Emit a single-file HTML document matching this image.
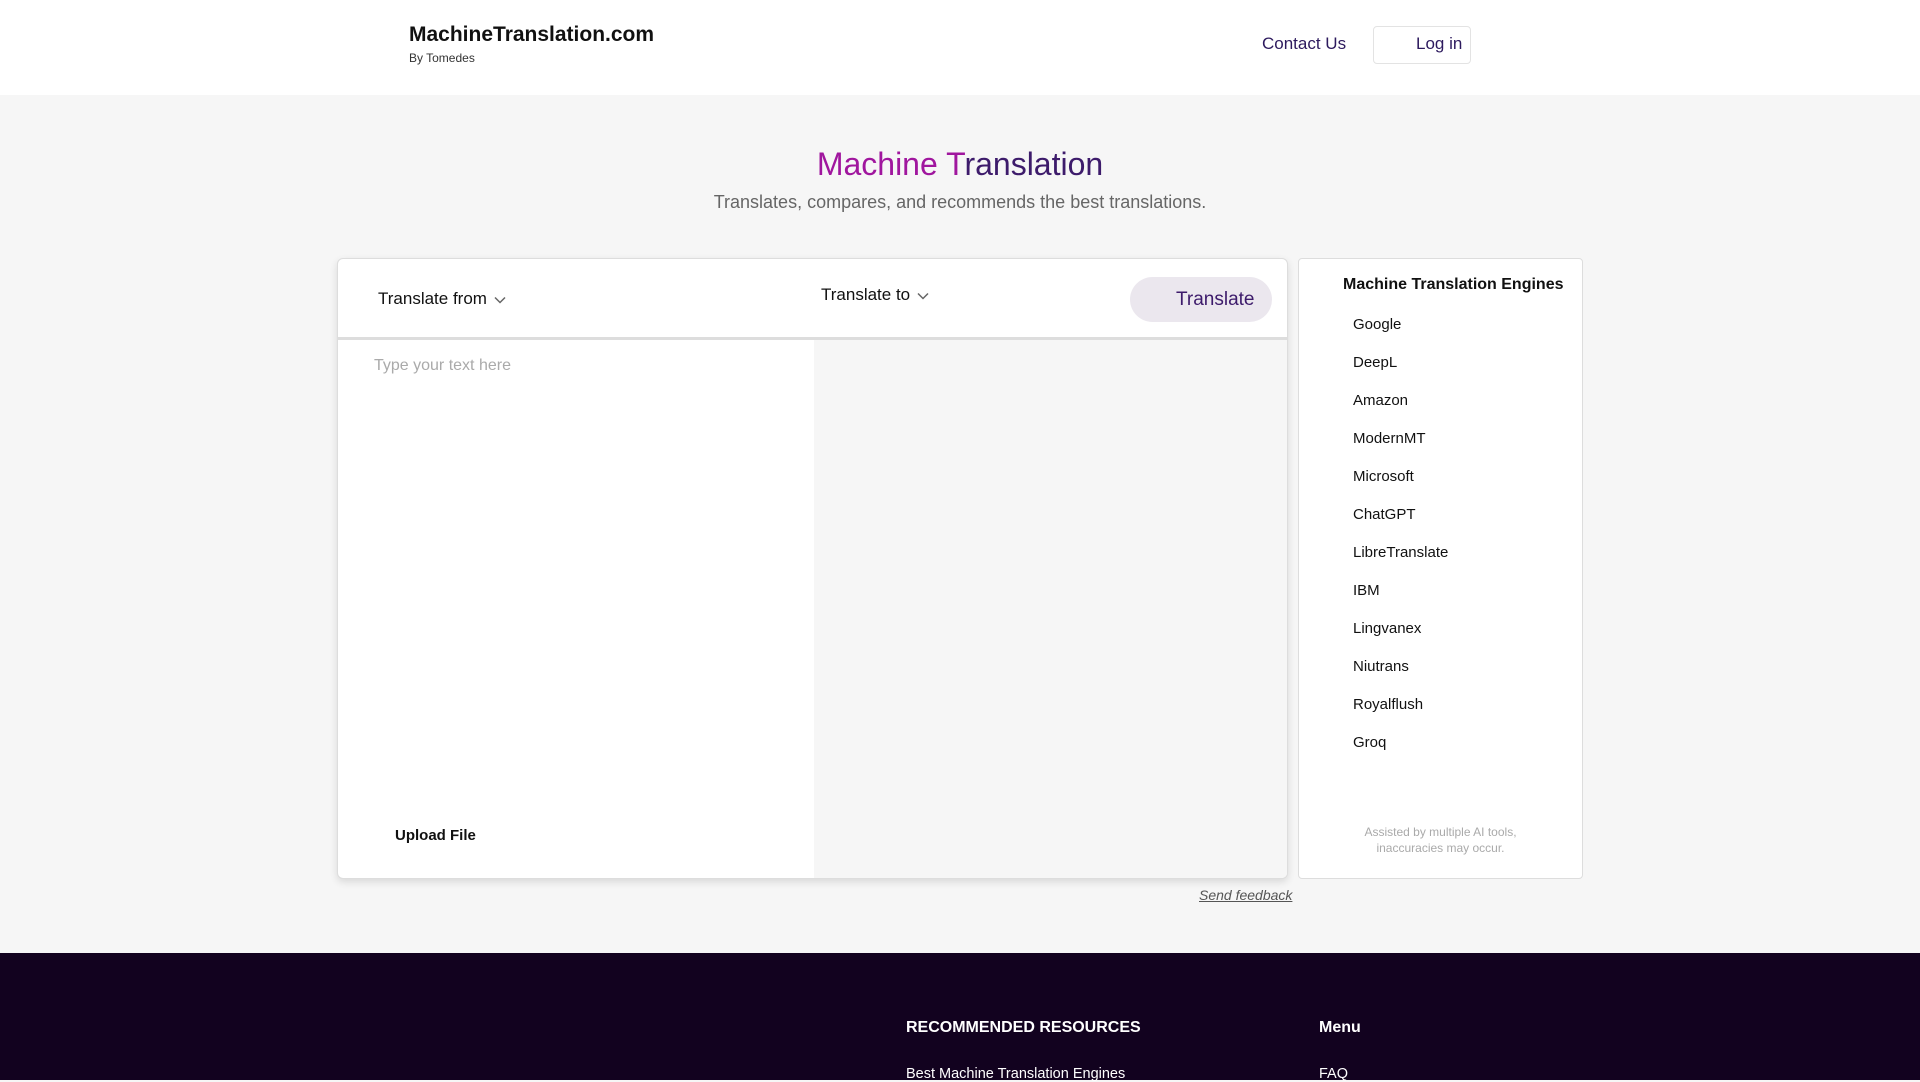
<!DOCTYPE html>
<html><head><meta charset="utf-8"><style>
*{box-sizing:border-box;margin:0;padding:0}
body{width:1920px;height:1080px;overflow:hidden;background:#f6f6f6;font-family:"Liberation Sans",sans-serif;position:relative}
.a{position:absolute;white-space:nowrap}
</style></head><body>
<div class="a" style="left:0;top:0;width:1920px;height:95px;background:#fff"></div>
<div class="a" style="left:409px;top:23px;font-size:21px;font-weight:bold;color:#111">MachineTranslation.com</div>
<div class="a" style="left:409px;top:51px;font-size:12px;color:#333">By Tomedes</div>
<div class="a" style="left:1262px;top:34px;font-size:17px;color:#2d1a5e">Contact Us</div>
<div class="a" style="left:1373px;top:26px;width:98px;height:38px;border:1px solid #e3e3e3;border-radius:4px;background:#fff"></div>
<div class="a" style="left:1416px;top:34px;font-size:17px;color:#2d1a5e">Log in</div>
<div class="a" style="left:0;width:1920px;top:146px;text-align:center;font-size:32px;"><span style="color:#a0169e">Machine T</span><span style="color:#3d1b6b">ranslation</span></div>
<div class="a" style="left:0;width:1920px;top:192px;text-align:center;font-size:18px;color:#666">Translates, compares, and recommends the best translations.</div>
<div class="a" style="left:337px;top:258px;width:951px;height:621px;background:#fff;border:1px solid #ddd;border-radius:6px;box-shadow:0 3px 8px rgba(0,0,0,.12);overflow:hidden">
 <div class="a" style="left:0;top:78px;width:951px;height:3px;background:#ddd"></div>
 <div class="a" style="left:476px;top:81px;width:475px;height:540px;background:#f6f6f6"></div>
 <div class="a" style="left:40px;top:30px;font-size:17px;color:#111">Translate from <svg width="12" height="8" viewBox="0 0 12 8" style="margin-left:2px"><path d="M1 1.5l5 5 5-5" fill="none" stroke="#666" stroke-width="1.5"/></svg></div>
 <div class="a" style="left:483px;top:26px;font-size:17px;color:#111">Translate to <svg width="12" height="8" viewBox="0 0 12 8" style="margin-left:2px"><path d="M1 1.5l5 5 5-5" fill="none" stroke="#666" stroke-width="1.5"/></svg></div>
 <div class="a" style="left:792px;top:18px;width:142px;height:45px;border-radius:23px;background:#ebe7ee"></div>
 <div class="a" style="left:838px;top:30px;font-size:19px;color:#3d1b6b">Translate</div>
 <div class="a" style="left:36px;top:98px;font-size:16px;color:#aaa">Type your text here</div>
 <div class="a" style="left:57px;top:568px;font-size:15px;color:#111;font-weight:bold">Upload File</div>
</div>
<div class="a" style="left:1298px;top:258px;width:285px;height:621px;background:#fff;border:1px solid #ddd;border-radius:4px"></div>
<div class="a" style="left:1343px;top:276px;font-size:16px;font-weight:bold;color:#111">Machine Translation Engines</div>
<div class="a" style="left:1353px;top:306px;font-size:15px;color:#111;line-height:38px">Google<br>DeepL<br>Amazon<br>ModernMT<br>Microsoft<br>ChatGPT<br>LibreTranslate<br>IBM<br>Lingvanex<br>Niutrans<br>Royalflush<br>Groq</div>
<div class="a" style="left:1298px;width:285px;top:824px;text-align:center;font-size:12px;color:#aaa;line-height:16px">Assisted by multiple AI tools,<br>inaccuracies may occur.</div>
<div class="a" style="left:1199px;top:887px;font-size:14px;font-style:italic;color:#555;text-decoration:underline">Send feedback</div>
<div class="a" style="left:0;top:953px;width:1920px;height:127px;background:#12021f"></div>
<div class="a" style="left:906px;top:1019px;font-size:16px;font-weight:bold;color:#fff">RECOMMENDED RESOURCES</div>
<div class="a" style="left:1319px;top:1019px;font-size:16px;font-weight:bold;color:#fff">Menu</div>
<div class="a" style="left:906px;top:1066px;font-size:14.5px;color:#fff">Best Machine Translation Engines</div>
<div class="a" style="left:1319px;top:1066px;font-size:14.5px;color:#fff">FAQ</div>
</body></html>
